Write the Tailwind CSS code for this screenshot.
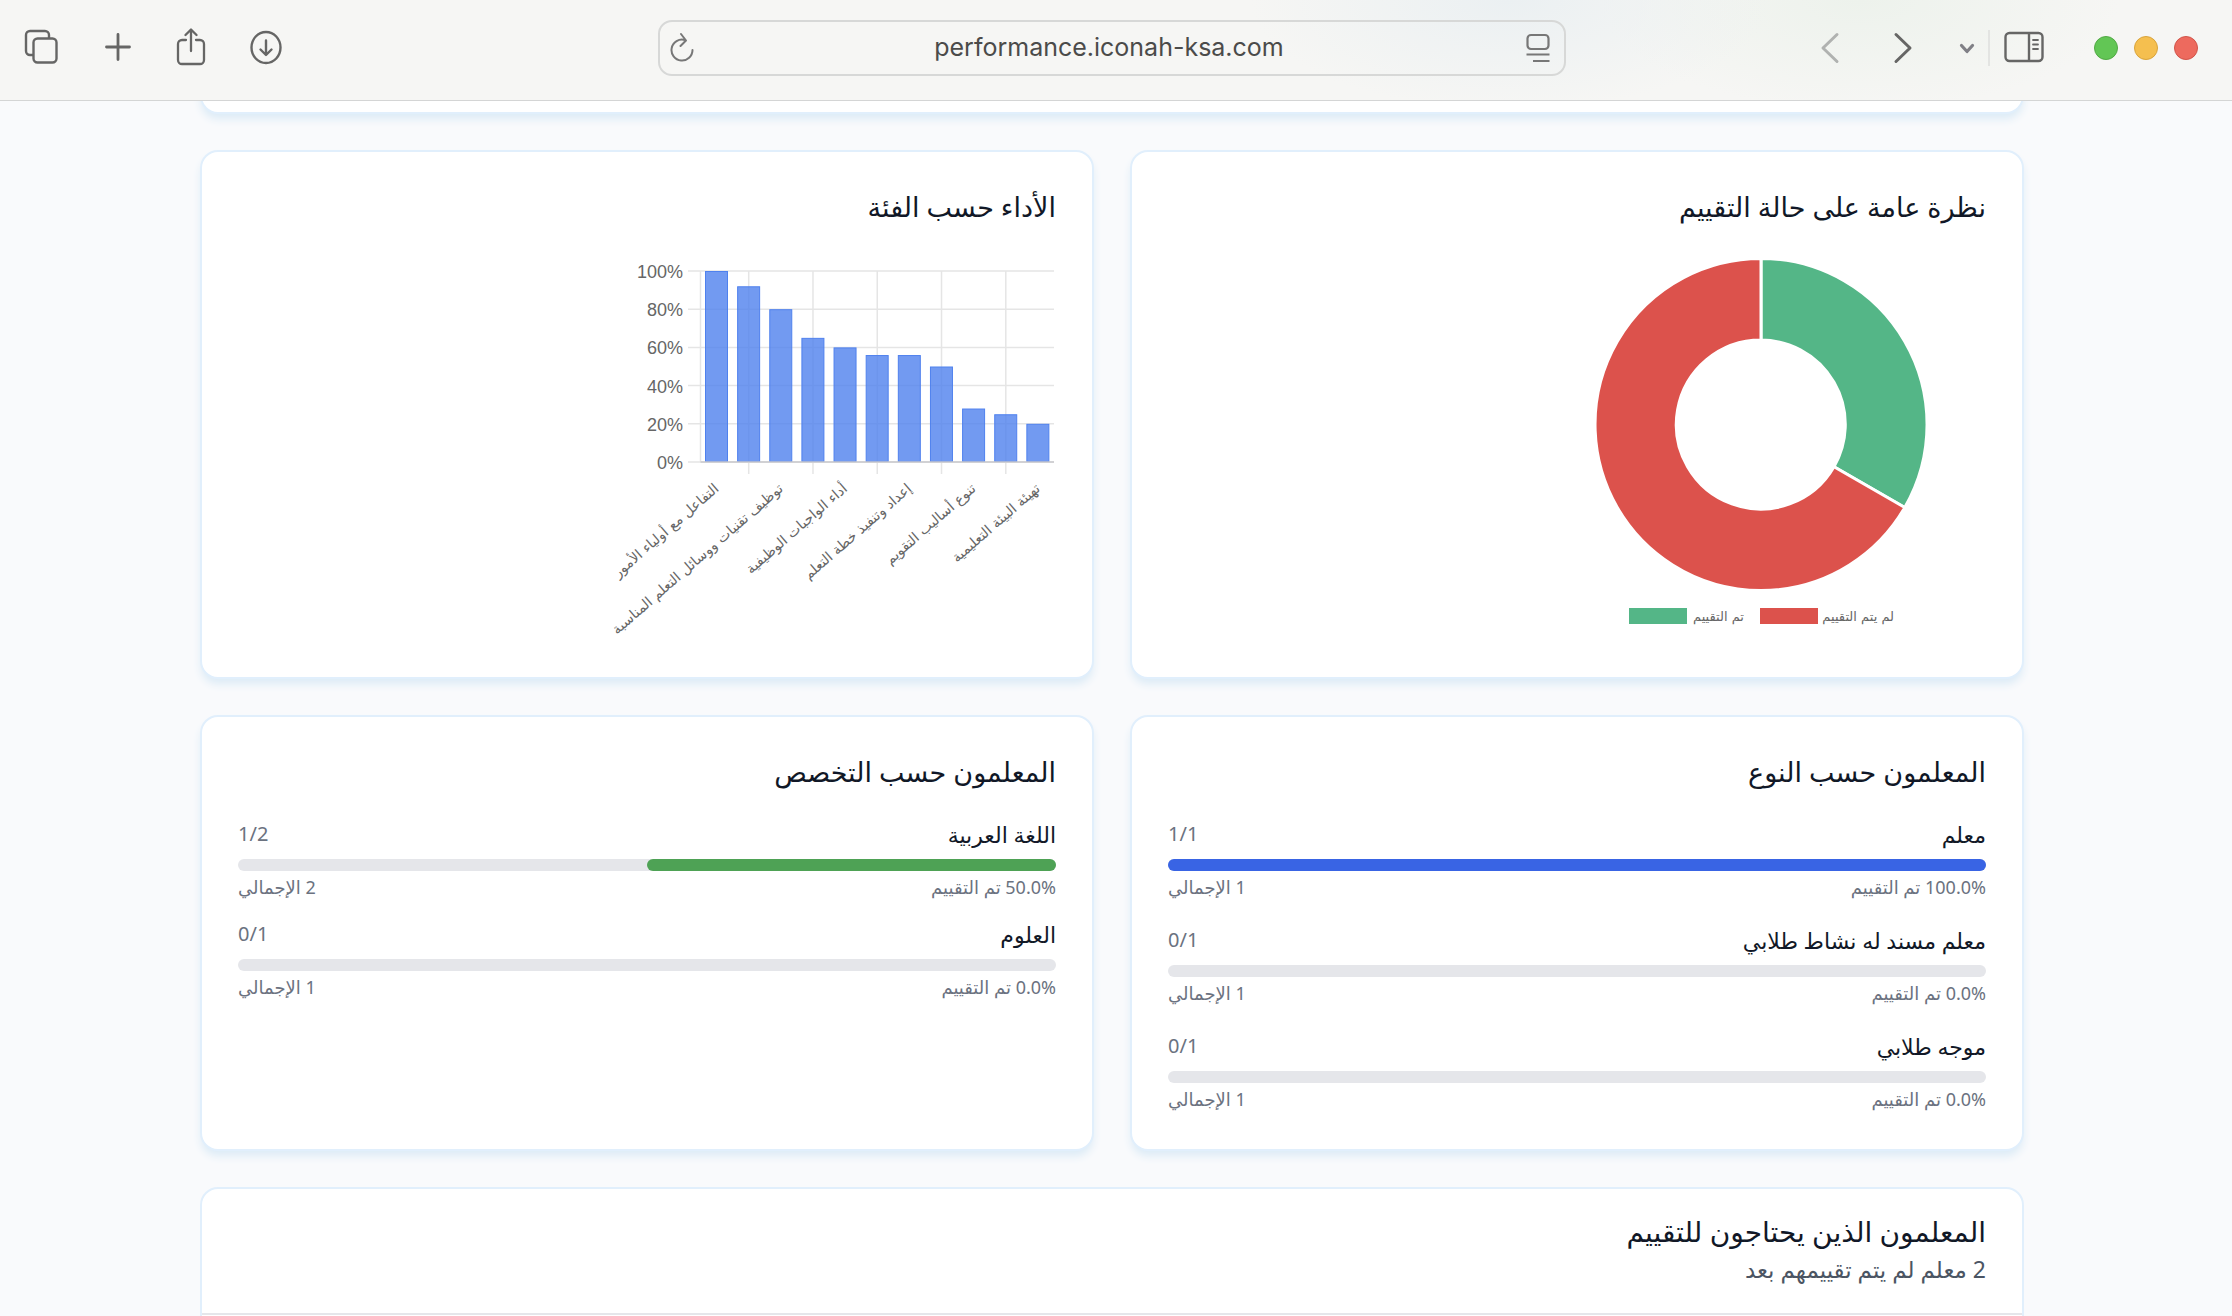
<!DOCTYPE html>
<html lang="ar" dir="rtl">
<head>
    <meta charset="UTF-8">
    <meta name="viewport" content="width=device-width, initial-scale=1.0">
    <title>لوحة الأداء</title>
    <script src="https://cdn.jsdelivr.net/npm/@tailwindcss/browser@4"></script>
</head>
<body class="flex h-screen flex-col overflow-hidden bg-[#f9fafc] font-['Noto_Sans','DejaVu_Sans',sans-serif] text-[#111827]">

    <!-- Browser toolbar -->
    <header dir="ltr" class="grid h-[101px] shrink-0 grid-cols-[1fr_908px_1fr] items-center border-b border-[#d4d5d5] bg-[#f6f6f4] bg-[radial-gradient(ellipse_260px_110px_at_1510px_0px,#ebf0f2,transparent),radial-gradient(ellipse_260px_110px_at_1860px_0px,#edf2ec,transparent)] pr-2 pb-[5px] text-[#666665]">
        <div class="flex items-center gap-[41px] pl-[23px]">
            <button type="button" aria-label="Tabs"><svg class="h-10 w-10" viewBox="1 0 40 40" fill="none" stroke="currentColor" stroke-width="2.4"><path d="M11 27H8a4 4 0 0 1-4-4V7a4 4 0 0 1 4-4h15a4 4 0 0 1 4 4v3"/><rect x="11.500" y="10.500" width="23" height="24" rx="4"/></svg></button>
            <button type="button" aria-label="New tab"><svg class="h-10 w-[30px]" viewBox="3 0 30 40" fill="none" stroke="currentColor" stroke-width="2.800" stroke-linecap="round"><path d="M17 6.500v25M5.500 19h23"/></svg></button>
            <button type="button" aria-label="Share"><svg class="h-10 w-8" viewBox="0 0 32 40" fill="none" stroke="currentColor" stroke-width="2.300" stroke-linecap="round" stroke-linejoin="round"><path d="M11 12H7a4 4 0 0 0-4 4v16a4 4 0 0 0 4 4h18a4 4 0 0 0 4-4V16a4 4 0 0 0-4-4h-4M16 23V2M10.500 7 16 1.500 21.500 7"/></svg></button>
            <button type="button" aria-label="Downloads"><svg class="h-10 w-9" viewBox="0 0 36 40" fill="none" stroke="currentColor" stroke-width="2.400" stroke-linecap="round" stroke-linejoin="round"><ellipse cx="18" cy="19.500" rx="14.500" ry="15.500"/><path d="M18 12.500v14M12.500 21.500l5.500 5.500 5.500-5.500"/></svg></button>
        </div>

        <div class="flex h-14 items-center justify-between rounded-[14px] border-2 border-[#d7d8d7] px-[10px]">
            <button type="button" aria-label="Reload"><svg class="h-8 w-6" viewBox="0 0 24 32" fill="none" stroke="#777" stroke-width="2" stroke-linecap="round" stroke-linejoin="round"><path d="M15 8A10.500 10.500 0 1 0 22.500 18M11 2l5 6.500-5.500 5.500"/></svg></button>
            <input type="text" aria-label="Address" value="performance.iconah-ksa.com" class="min-w-0 flex-1 bg-transparent text-center font-['Inter',sans-serif] text-[25px] text-[#4b4b4a] outline-none">
            <button type="button" aria-label="Reader"><svg class="h-8 w-[30px]" viewBox="1 0 30 32" fill="none" stroke="#777" stroke-width="2.200"><rect x="4.500" y="3" width="21" height="14" rx="3.500"/><path d="M3.500 22.500h23M10 29h16.500"/></svg></button>
        </div>

        <div class="flex items-center justify-end pr-[26px]">
            <button type="button" aria-label="Back" class="mr-[51px]"><svg class="h-10 w-[22px]" viewBox="0 0 22 40" fill="none" stroke="#b0b2b0" stroke-width="3" stroke-linecap="round" stroke-linejoin="round"><path d="M18 6.500 4 20l14 13.500"/></svg></button>
            <button type="button" aria-label="Forward" class="mr-[44px]"><svg class="h-10 w-[22px]" viewBox="0 0 22 40" fill="none" stroke="currentColor" stroke-width="3" stroke-linecap="round" stroke-linejoin="round"><path d="m4 6.500 14 13.500L4 33.500"/></svg></button>
            <button type="button" aria-label="Tab groups" class="mr-[12px]"><svg class="h-10 w-[18px]" viewBox="0 0 18 40" fill="none" stroke="#808086" stroke-width="3.200" stroke-linecap="round" stroke-linejoin="round"><path d="m3.500 17.500 5.500 6 5.500-6"/></svg></button>
            <span class="mr-[14px] h-9 w-[2px] bg-[#e3e4e2]"></span>
            <button type="button" aria-label="Sidebar" class="mr-[50px]"><svg class="h-10 w-10" viewBox="0 1 40 40" fill="none" stroke="currentColor" stroke-width="2.400"><rect x="1.500" y="6" width="37" height="28" rx="4"/><path d="M25 6v28"/><path d="M29 13h5M29 17.500h5M29 22h5" stroke-width="1.800" stroke-linecap="round"/></svg></button>
            <div class="flex gap-4">
                <span class="h-6 w-6 rounded-full border border-[#52a945] bg-[#62c655]"></span>
                <span class="h-6 w-6 rounded-full border border-[#d9a43c] bg-[#f5bf4f]"></span>
                <span class="h-6 w-6 rounded-full border border-[#d1554a] bg-[#ed6a5e]"></span>
            </div>
        </div>
    </header>

    <main class="min-h-0 flex-1 overflow-hidden pl-[200px] pr-[208px]">
        <!-- Bottom of the previous section -->
        <section class="-mt-[35px] h-12 rounded-[18px] border-2 border-[#e1effc] bg-white shadow-[0_6px_9px_-1px_#dcebf6]"></section>

        <div class="mt-9 grid grid-cols-2 gap-9">
            <section class="rounded-[18px] border-2 border-[#e1effc] bg-white px-9 pt-[34px] pb-9 shadow-[0_6px_9px_-1px_#dcebf6]">
                <h3 class="mb-[27px] text-[27px] leading-[42px]">نظرة عامة على حالة التقييم</h3>
                <svg class="h-[386px] w-[450px]" viewBox="0 0 450 386" direction="ltr">
                    <g stroke="#fff" stroke-width="3">
                        <path fill="#54b687" d="M225 3.500A166 166 0 0 1 368.800 252.500L298 211.700A84.500 84.500 0 0 0 225 85Z"/>
                        <path fill="#dc524c" d="M368.800 252.500A166 166 0 1 1 225 3.500V85A84.500 84.500 0 1 0 298 211.700Z"/>
                    </g>
                    <path fill="#54b687" d="M93 353h58v16H93z"/>
                    <path fill="#dc524c" d="M224 353h58v16h-58z"/>
                    <g class="fill-[#666] font-['DejaVu_Sans',sans-serif] text-[13px]" text-anchor="end">
                        <text x="208" y="366">تم التقييم</text>
                        <text x="358" y="366">لم يتم التقييم</text>
                    </g>
                </svg>
            </section>

            <section class="rounded-[18px] border-2 border-[#e1effc] bg-white px-9 pt-[34px] pb-9 shadow-[0_6px_9px_-1px_#dcebf6]">
                <h3 class="mb-[27px] text-[27px] leading-[42px]">الأداء حسب الفئة</h3>
                <svg id="categoryChart" class="h-[386px] w-[450px] overflow-visible" viewBox="0 0 450 386" direction="ltr"></svg>
            </section>

            <section class="rounded-[18px] border-2 border-[#e1effc] bg-white px-9 pt-[34px] pb-9 shadow-[0_6px_9px_-1px_#dcebf6]">
                <h3 class="mb-[26px] text-[27px] leading-[42px]">المعلمون حسب النوع</h3>
                <div class="space-y-6">
                    <div>
                        <div class="mb-[10px] flex justify-between text-[22px] leading-[30px]"><span>معلم</span><span class="text-[20px] text-[#6b7280]" dir="ltr">1/1</span></div>
                        <div class="h-3 rounded-full bg-[#e5e6ea]"><div class="h-3 rounded-full bg-[#3964e4]" style="width: 100%"></div></div>
                        <div class="mt-1 flex justify-between pb-[2px] text-[18px] leading-6 text-[#6b7280]"><span><bdi dir="ltr">100.0%</bdi> تم التقييم</span><span>1 الإجمالي</span></div>
                    </div>
                    <div>
                        <div class="mb-[10px] flex justify-between text-[22px] leading-[30px]"><span>معلم مسند له نشاط طلابي</span><span class="text-[20px] text-[#6b7280]" dir="ltr">0/1</span></div>
                        <div class="h-3 rounded-full bg-[#e5e6ea]"></div>
                        <div class="mt-1 flex justify-between pb-[2px] text-[18px] leading-6 text-[#6b7280]"><span><bdi dir="ltr">0.0%</bdi> تم التقييم</span><span>1 الإجمالي</span></div>
                    </div>
                    <div>
                        <div class="mb-[10px] flex justify-between text-[22px] leading-[30px]"><span>موجه طلابي</span><span class="text-[20px] text-[#6b7280]" dir="ltr">0/1</span></div>
                        <div class="h-3 rounded-full bg-[#e5e6ea]"></div>
                        <div class="mt-1 flex justify-between pb-[2px] text-[18px] leading-6 text-[#6b7280]"><span><bdi dir="ltr">0.0%</bdi> تم التقييم</span><span>1 الإجمالي</span></div>
                    </div>
                </div>
            </section>

            <section class="rounded-[18px] border-2 border-[#e1effc] bg-white px-9 pt-[34px] pb-9 shadow-[0_6px_9px_-1px_#dcebf6]">
                <h3 class="mb-[26px] text-[27px] leading-[42px]">المعلمون حسب التخصص</h3>
                <div class="space-y-[18px]">
                    <div>
                        <div class="mb-[10px] flex justify-between text-[22px] leading-[30px]"><span>اللغة العربية</span><span class="text-[20px] text-[#6b7280]" dir="ltr">1/2</span></div>
                        <div class="h-3 rounded-full bg-[#e5e6ea]"><div class="h-3 rounded-full bg-[#4ea255]" style="width: 50%"></div></div>
                        <div class="mt-1 flex justify-between pb-[2px] text-[18px] leading-6 text-[#6b7280]"><span><bdi dir="ltr">50.0%</bdi> تم التقييم</span><span>2 الإجمالي</span></div>
                    </div>
                    <div>
                        <div class="mb-[10px] flex justify-between text-[22px] leading-[30px]"><span>العلوم</span><span class="text-[20px] text-[#6b7280]" dir="ltr">0/1</span></div>
                        <div class="h-3 rounded-full bg-[#e5e6ea]"></div>
                        <div class="mt-1 flex justify-between pb-[2px] text-[18px] leading-6 text-[#6b7280]"><span><bdi dir="ltr">0.0%</bdi> تم التقييم</span><span>1 الإجمالي</span></div>
                    </div>
                </div>
            </section>
        </div>

        <section class="mt-9 rounded-[18px] border-2 border-[#e1effc] bg-white">
            <div class="border-b-2 border-[#e5e6ea] px-9 pt-[21px] pb-[27px]">
                <h3 class="text-[28px] leading-[42px]">المعلمون الذين يحتاجون للتقييم</h3>
                <p class="text-[23px] leading-[34px] text-[#4b5563]">2 معلم لم يتم تقييمهم بعد</p>
            </div>
            <div class="h-40"></div>
        </section>
    </main>

    <script>
        const values = [100, 92, 80, 65, 60, 56, 56, 50, 28, 25, 20];
        const labels = [
            "التفاعل مع أولياء الأمور",
            "توظيف تقنيات ووسائل التعلم المناسبة",
            "أداء الواجبات الوظيفية",
            "إعداد وتنفيذ خطة التعلم",
            "تنوع أساليب التقويم",
            "تهيئة البيئة التعليمية"
        ];
        const left = 94.5, right = 448, top0 = 16, bottom = 207;
        const step = (right - left) / values.length;
        let out = "";

        // grid
        for (let v = 0; v <= 100; v += 20) {
            const y = bottom - (bottom - top0) * v / 100;
            out += `<path d="M82 ${y}H${right}" stroke="#e5e5e5" stroke-width="1.5"/>`;
            out += `<text x="77" y="${y + 7}" text-anchor="end" class="fill-[#666] font-['Liberation_Sans',sans-serif] text-[18px]">${v}%</text>`;
        }
        out += `<path d="M${left} ${top0}V${bottom}" stroke="#e5e5e5" stroke-width="1.5"/>`;
        for (let i = 1; i < values.length; i += 2) {
            out += `<path d="M${left + step * (i + 0.5)} ${top0}V219" stroke="#e5e5e5" stroke-width="1.5"/>`;
        }

        // bars
        values.forEach((v, i) => {
            const h = (bottom - top0) * v / 100;
            out += `<rect x="${left + step * i + 5}" y="${bottom - h + 0.5}" width="22" height="${h - 1}" fill="#4f81ee" fill-opacity="0.8" stroke="#4f81ee" stroke-width="1"/>`;
        });
        out += `<path d="M${left} ${bottom}H${right}" stroke="#c9c9cc" stroke-width="1.5"/>`;

        // labels
        labels.forEach((t, i) => {
            const x = left + step * (i * 2 + 0.5) + 3;
            out += `<text transform="translate(${x} 235) rotate(-41)" text-anchor="end" class="fill-[#666] font-['DejaVu_Sans',sans-serif] text-[14px]">${t}</text>`;
        });
        document.getElementById("categoryChart").innerHTML = out;
    </script>
</body>
</html>
